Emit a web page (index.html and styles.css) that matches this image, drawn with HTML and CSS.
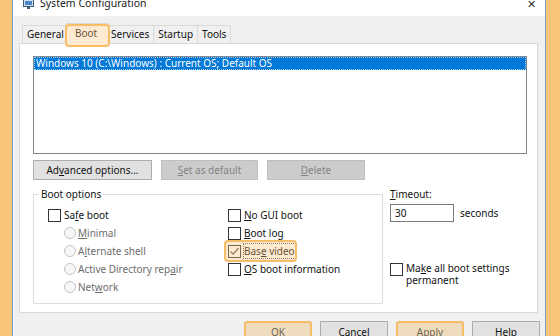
FILE: index.html
```html
<!DOCTYPE html>
<html>
<head>
<meta charset="utf-8">
<link rel="stylesheet" href="styles.css">
</head>
<body>
<div class="screen">
  <div class="strip left"></div>
  <div class="window">
    <div class="titlebar">
      <div class="titlerow">
        <svg class="appicon" width="11" height="10" viewBox="0 0 11 10">
          <rect x="0.5" y="0.5" width="10" height="7" fill="#cfe3f5" stroke="#3d5a7a"/>
          <rect x="2" y="2" width="7" height="4" fill="#4a86c5"/>
          <rect x="4" y="8" width="3" height="2" fill="#3d5a7a"/>
        </svg>
        <span class="title">System Configuration</span>
        <span class="close">✕</span>
      </div>
    </div>
    <div class="client">
      <div class="tabs">
        <div class="tab">General</div>
        <div class="tab sel">Boot<span class="hl"></span></div>
        <div class="tab">Services</div>
        <div class="tab">Startup</div>
        <div class="tab">Tools</div>
      </div>
      <div class="panel">
        <div class="list"><div class="item">Windows 10 (C:\Windows) : Current OS; Default OS</div></div>
        <div class="btnrow">
          <div class="btn adv">Ad<u>v</u>anced options...</div>
          <div class="btn dis setdef"><u>S</u>et as default</div>
          <div class="btn dis del"><u>D</u>elete</div>
        </div>
        <div class="lower">
          <div class="group">
            <div class="legend">Boot options</div>
            <div class="cols">
              <div class="col colleft">
                <div class="row"><span class="cb"></span><span>Sa<u>f</u>e boot</span></div>
                <div class="row sub dim"><span class="rb"></span><span><u>M</u>inimal</span></div>
                <div class="row sub dim"><span class="rb"></span><span>A<u>l</u>ternate shell</span></div>
                <div class="row sub dim"><span class="rb"></span><span>Active Directory rep<u>a</u>ir</span></div>
                <div class="row sub dim"><span class="rb"></span><span>Net<u>w</u>ork</span></div>
              </div>
              <div class="col colright">
                <div class="row"><span class="cb"></span><span><u>N</u>o GUI boot</span></div>
                <div class="row"><span class="cb"></span><span><u>B</u>oot log</span></div>
                <div class="row"><span class="hlwrap"><span class="cb checked"><svg width="11" height="11" viewBox="0 0 11 11"><path d="M1.5 5.5 L4.2 8.2 L9.5 2" fill="none" stroke="#555" stroke-width="1.2"/></svg></span><span class="focus">Bas<u>e</u> video</span><span class="hl"></span></span></div>
                <div class="row"><span class="cb"></span><span><u>O</u>S boot information</span></div>
              </div>
            </div>
          </div>
          <div class="side">
            <div class="tlabel"><u>T</u>imeout:</div>
            <div class="trow"><div class="input">30</div><span class="secs">seconds</span></div>
            <div class="perm"><span class="cb"></span><span class="permtext">Ma<u>k</u>e all boot settings permanent</span></div>
          </div>
        </div>
      </div>
      <div class="footer">
        <div class="btn fbtn hlbtn">OK</div>
        <div class="btn fbtn">Cancel</div>
        <div class="btn fbtn hlbtn"><u>A</u>pply</div>
        <div class="btn fbtn">Help</div>
      </div>
    </div>
  </div>
  <div class="strip right"></div>
</div>
</body>
</html>
```

FILE: styles.css
```css
* { box-sizing: border-box; }
html, body { margin: 0; padding: 0; }
body {
  width: 560px;
  height: 336px;
  overflow: hidden;
  font-family: "Noto Sans", "Open Sans", sans-serif;
  font-size: 10px;
  color: #111;
  background: #f0f0f0;
}
u { text-decoration-thickness: 1px; text-underline-offset: 1px; }
.screen { display: flex; width: 560px; height: 336px; }
.strip { background: #f8c67a; flex: none; height: 100%; }
.strip.left { width: 13px; border-right: 1px solid #7b9fc9; }
.strip.right { width: 15px; border-left: 1px solid #7b9fc9; }
.window { flex: 1; display: flex; flex-direction: column; background: #f0f0f0; min-width: 0; }

.titlebar { height: 16px; background: #fff; overflow: hidden; flex: none; }
.titlerow { display: flex; align-items: center; height: 22px; margin-top: -8px; padding-left: 10px; }
.appicon { flex: none; margin-top: 1px; }
.title { margin-left: 6px; font-size: 10.5px; color: #222; }
.close { margin-left: auto; margin-right: 9px; font-size: 11px; color: #333; margin-top: 1px; }

.client { padding: 6px 7px 0 6px; display: flex; flex-direction: column; }
.tabs { display: flex; align-items: flex-end; height: 21px; padding-left: 3px; position: relative; z-index: 2; }
.tab {
  height: 18px; line-height: 16px; padding: 0 4px;
  border: 1px solid #d9d9d9; border-bottom: none; margin-left: -1px;
  background: #f0f0f0; color: #111; position: relative;
}
.tab:first-child { margin-left: 0; }
.tab.sel { height: 21px; background: #fff; margin: 0 -2px 0 -3px; padding: 0 11px 0 8px; line-height: 18px; z-index: 3; margin-bottom: -1px; }
.hl {
  position: absolute; border: 2px solid #f5bd66; border-radius: 4px;
  background: rgba(249, 196, 120, 0.35);
}
.tab.sel .hl { left: -2px; right: -2px; top: 0; bottom: -3px; }

.panel {
  background: #fff; border: 1px solid #d9d9d9; height: 270px;
  padding: 12px 10px 0 13px; display: flex; flex-direction: column;
}
.list { height: 98px; border: 1px solid #828790; padding: 0; }
.item {
  background: #0078d7; color: #fff; height: 13px; line-height: 12px;
  padding-left: 2px; margin: 0; outline: 1px dotted #9cc8f0; outline-offset: -1px;
}

.btnrow { display: flex; margin-top: 6px; gap: 9px; }
.btn {
  height: 20px; line-height: 18px; text-align: center;
  background: #e1e1e1; border: 1px solid #adadad; color: #111;
}
.adv { width: 119px; }
.setdef { width: 97px; }
.del { width: 98px; }
.btn.dis { background: #cccccc; border-color: #bfbfbf; color: #838383; }

.lower { display: flex; }
.group { width: 350px; height: 110px; margin-top: 14px; border: 1px solid #dcdcdc; padding: 0 0 0 14px; }
.legend { display: table; background: #fff; margin: -8px 0 0 -9px; padding: 0 2px; line-height: 14px; }
.cols { display: flex; margin-top: 5px; }
.colleft { width: 180px; }
.row { height: 18px; display: flex; align-items: center; white-space: nowrap; }
.row.sub { padding-left: 16px; }
.dim { color: #6d6d6d; }
.cb {
  width: 13px; height: 13px; border: 1px solid #333; background: #fff; flex: none;
  margin-right: 3px; display: inline-flex; align-items: center; justify-content: center;
}
.rb {
  width: 12px; height: 12px; border-radius: 50%; border: 1px solid #c4c4c4;
  background: #f7f7f7; margin-right: 2px; flex: none;
}
.hlwrap { display: inline-flex; align-items: center; position: relative; }
.hlwrap .hl { left: -4px; right: -2px; top: -4px; bottom: -4px; }
.focus { outline: 1px dotted #555; outline-offset: 0; }

.side { margin-left: 7px; display: flex; flex-direction: column; }
.tlabel { margin-top: 8px; line-height: 12px; }
.trow { display: flex; align-items: center; margin-top: 4px; }
.input { width: 64px; height: 18px; border: 1px solid #7a7a7a; background: #fff; padding-left: 4px; line-height: 16px; }
.secs { margin-left: 6px; }
.perm { display: flex; margin-top: 41px; align-items: flex-start; }
.permtext { width: 118px; line-height: 12px; margin-top: -1px; }

.footer { display: flex; justify-content: flex-end; gap: 8px; margin-top: 8px; padding-right: 0; margin-right: -2px; }
.fbtn { width: 68px; height: 23px; line-height: 21px; }
.hlbtn { border: 2px solid #f5bd66; border-radius: 3px; background: #efdbbd; color: #6f6656; line-height: 19px; }
```
